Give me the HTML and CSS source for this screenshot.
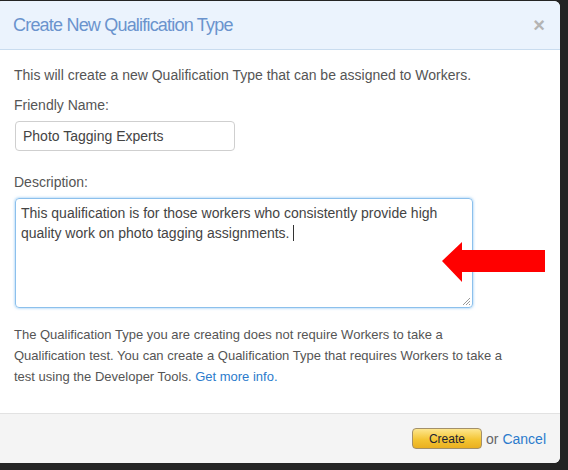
FILE: index.html
```html
<!DOCTYPE html>
<html>
<head>
<meta charset="utf-8">
<link rel="stylesheet" href="styles.css">
</head>
<body>
<div class="modal">
  <div class="header">
    <h1 class="title">Create New Qualification Type</h1>
    <span class="close">×</span>
  </div>
  <div class="content">
    <p class="intro">This will create a new Qualification Type that can be assigned to Workers.</p>
    <label class="label">Friendly Name:</label>
    <div class="input">Photo Tagging Experts</div>
    <label class="label label-desc">Description:</label>
    <div class="textarea">This qualification is for those workers who consistently provide high quality work on photo tagging assignments. <span class="caret"></span>
      <svg class="grip" width="9" height="9" viewBox="0 0 9 9"><path d="M8 1 L1 8 M8 4 L4 8 M8 7 L7 8" stroke="#999" stroke-width="1" fill="none"/></svg>
    </div>
    <p class="note">The Qualification Type you are creating does not require Workers to take a Qualification test. You can create a Qualification Type that requires Workers to take a test using the Developer Tools. <a class="link" href="#">Get more info.</a></p>
  </div>
  <div class="footer">
    <button class="btn-create">Create</button>
    <span class="or">or</span>
    <a class="link cancel" href="#">Cancel</a>
  </div>
  <svg class="arrow" width="104" height="42" viewBox="0 0 104 42"><polygon points="0,20 20,1 20,9 103,9 103,31 20,31 20,41" fill="#ff0000"/></svg>
</div>
</body>
</html>
```

FILE: styles.css
```css
html, body {
  margin: 0;
  padding: 0;
}
body {
  background: #242424;
  width: 568px;
  height: 470px;
  overflow: hidden;
  font-family: "Liberation Sans", Arial, sans-serif;
}
.modal {
  position: relative;
  margin: 1px 0 0 -4px;
  width: 564px;
  height: 462px;
  background: #fff;
  border-radius: 6px;
  overflow: hidden;
  display: flex;
  flex-direction: column;
}
.header {
  height: 48px;
  flex: none;
  background: #ebf3fd;
  border-bottom: 1px solid #c9dcef;
  display: flex;
  align-items: center;
  justify-content: space-between;
  padding: 0 15px 0 17px;
}
.title {
  margin: 0;
  font-size: 18px;
  font-weight: normal;
  letter-spacing: -0.8px;
  color: #6a93cd;
}
.close {
  font-size: 20px;
  font-weight: bold;
  color: #b4b4b4;
  line-height: 1;
}
.content {
  flex: 1;
  padding: 16px 18px 0 18px;
  font-size: 14px;
  color: #555;
}
.intro {
  margin: 0;
  line-height: 18px;
}
.label {
  display: block;
  line-height: 18px;
  margin-top: 12px;
}
.label-desc {
  margin-top: 22px;
}
.input {
  margin: 7px 0 0 1px;
  height: 28px;
  line-height: 28px;
  border: 1px solid #cfcfcf;
  border-radius: 4px;
  padding: 0 0 0 7px;
  width: 211px;
  color: #444;
}
.textarea {
  position: relative;
  margin: 7px 0 0 1px;
  width: 446px;
  height: 104px;
  border: 1px solid #8cc0ec;
  border-radius: 4px;
  box-shadow: 0 0 3px rgba(82, 168, 236, 0.7);
  padding: 4px 5px 0 5px;
  line-height: 20px;
  color: #444;
}
.caret {
  display: inline-block;
  width: 1px;
  height: 16px;
  background: #333;
  vertical-align: -3px;
}
.grip {
  position: absolute;
  right: 1px;
  bottom: 1px;
}
.note {
  margin: 16px 0 0 0;
  font-size: 13px;
  line-height: 21px;
  max-width: 495px;
}
.link {
  color: #2b7bcc;
  text-decoration: none;
}
.footer {
  flex: none;
  height: 49px;
  background: #f4f4f4;
  border-top: 1px solid #e2e2e2;
  display: flex;
  align-items: center;
  justify-content: flex-end;
  padding: 0 14px 0 0;
  font-size: 14px;
}
.btn-create {
  width: 70px;
  height: 21px;
  padding: 0;
  border: 1px solid #a3906a;
  border-radius: 4px;
  background: linear-gradient(#fde68e, #f4c534 55%, #eab020);
  font-family: "Liberation Sans", Arial, sans-serif;
  font-size: 12px;
  color: #1d2333;
  margin-right: 4px;
}
.or {
  color: #666;
  margin-right: 4px;
}
.cancel {
  font-size: 14px;
}
.arrow {
  position: absolute;
  left: 446px;
  top: 240px;
}
```
